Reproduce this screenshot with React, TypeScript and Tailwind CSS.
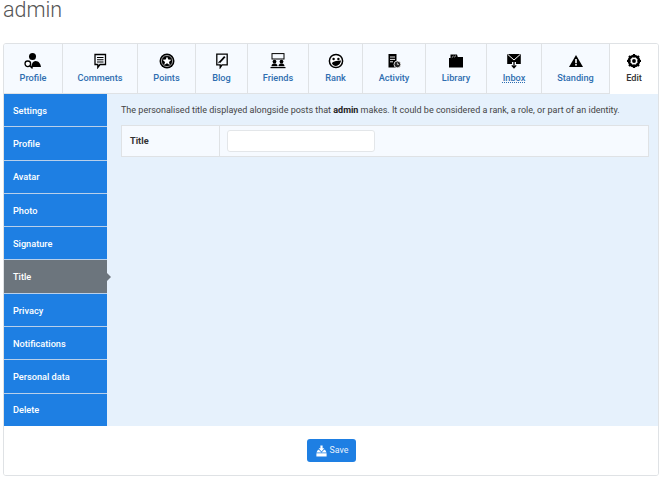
const font = { fontFamily: "Roboto, 'Open Sans', sans-serif" };

const ProfileIcon = () => (
  <svg width="18" height="16" viewBox="0 0 18 16" fill="#000">
    <circle cx="8.5" cy="3.5" r="3.5" />
    <path d="M7 14 C8 10 9 8 11.5 8 C15 8 16.5 11 17 14 Z" />
    <circle cx="3.8" cy="10.8" r="2.8" fill="#fff" stroke="#000" strokeWidth="1.3" />
    <path d="M5.8 12.8 L8.6 15.4" stroke="#000" strokeWidth="1.5" />
  </svg>
);

const CommentsIcon = () => (
  <svg width="16" height="16" viewBox="0 0 16 16" fill="none" stroke="#000">
    <path d="M3 1.5 H13.5 V11.5 H8 L5.8 14.5 V11.5 H3 Z" strokeWidth="1.3" />
    <path d="M5 4.5 H11.5 M5 6.7 H11.5 M5 9 H11.5" strokeWidth="1.1" />
  </svg>
);

const PointsIcon = () => (
  <svg width="16" height="16" viewBox="0 0 16 16">
    <circle cx="8" cy="8" r="7.5" fill="#000" />
    <circle cx="8" cy="8" r="5.6" fill="none" stroke="#fff" strokeWidth="0.6" />
    <path d="M8 3.6 L9.3 6.6 L12.4 6.8 L10 8.9 L10.8 12 L8 10.3 L5.2 12 L6 8.9 L3.6 6.8 L6.7 6.6 Z" fill="#fff" />
  </svg>
);

const BlogIcon = () => (
  <svg width="16" height="16" viewBox="0 0 16 16" fill="none" stroke="#000">
    <path d="M2.8 1.2 H13.2 V11.8 H8 L6.2 14.6 V11.8 H2.8 Z" strokeWidth="1.3" />
    <path d="M5.5 9.5 L10.8 3.6" strokeWidth="1.8" />
    <path d="M4.6 10.2 L5.4 8.4" strokeWidth="1" />
  </svg>
);

const FriendsIcon = () => (
  <svg width="18" height="16" viewBox="0 0 18 16" fill="#000">
    <rect x="3" y="0.6" width="12" height="5.4" fill="none" stroke="#000" strokeWidth="1" />
    <circle cx="5.5" cy="8.6" r="1.9" />
    <circle cx="12.5" cy="8.6" r="1.9" />
    <path d="M2.4 13.2 C2.8 11 4 10.6 5.5 10.6 C7 10.6 8.2 11 8.6 13.2 Z" />
    <path d="M9.4 13.2 C9.8 11 11 10.6 12.5 10.6 C14 10.6 15.2 11 15.6 13.2 Z" />
    <rect x="1.5" y="14" width="15" height="1.2" />
  </svg>
);

const RankIcon = () => (
  <svg width="16" height="16" viewBox="0 0 16 16">
    <circle cx="8" cy="8" r="6.6" fill="#fff" stroke="#000" strokeWidth="1.5" />
    <circle cx="5.6" cy="6" r="1.2" fill="#000" />
    <circle cx="10.4" cy="6" r="1.2" fill="#000" />
    <path d="M3.8 10 C6 8 9.5 8 13 7.6 C12.6 11 10 13 8 13 C6 13 4.6 12 3.8 10 Z" fill="#000" />
  </svg>
);

const ActivityIcon = () => (
  <svg width="16" height="16" viewBox="0 0 16 16">
    <path d="M2.5 1 H10.5 V14.5 H2.5 Z" fill="#000" />
    <path d="M4 4 H9 M4 6.4 H9 M4 8.8 H7" stroke="#fff" strokeWidth="0.9" />
    <circle cx="11.4" cy="11.4" r="3.4" fill="#222" stroke="#fff" strokeWidth="0.8" />
    <path d="M11.4 9.6 V11.4 H13" stroke="#fff" strokeWidth="0.7" fill="none" />
  </svg>
);

const LibraryIcon = () => (
  <svg width="16" height="16" viewBox="0 0 16 16">
    <path d="M1 5 H2.5 V1.5 H9 L9.8 4 H15 V14.5 H1 Z" fill="#000" />
    <path d="M3.8 4.6 L5.6 3 M6.2 4.2 L8 2.6" stroke="#fff" strokeWidth="0.7" />
  </svg>
);

const InboxIcon = () => (
  <svg width="16" height="16" viewBox="0 0 16 16">
    <path d="M1.2 1 H14.8 V11 H10 V9 H6 V11 H1.2 Z" fill="#000" />
    <path d="M1.5 1.2 L8 7 L14.5 1.2" fill="none" stroke="#fff" strokeWidth="1" />
    <path d="M8 8 V14.5 M5.8 12.4 L8 14.8 L10.2 12.4" fill="none" stroke="#000" strokeWidth="1.3" />
  </svg>
);

const StandingIcon = () => (
  <svg width="16" height="16" viewBox="0 0 16 16">
    <path d="M8 2 L15 14 H1 Z" fill="#000" />
    <rect x="7.2" y="6" width="1.6" height="4.2" fill="#fff" />
    <rect x="7.2" y="11" width="1.6" height="1.6" fill="#fff" />
  </svg>
);

const EditIcon = () => (
  <svg width="16" height="16" viewBox="0 0 16 16">
    <circle cx="8" cy="8" r="5" fill="none" stroke="#000" strokeWidth="2.6" />
    <path d="M8 1 V15 M1 8 H15 M3 3 L13 13 M13 3 L3 13" stroke="#000" strokeWidth="2.2" />
    <circle cx="8" cy="8" r="3.4" fill="#fff" />
    <circle cx="8" cy="8" r="1.9" fill="#000" />
  </svg>
);

const SaveIcon = () => (
  <svg width="11" height="12" viewBox="0 0 14 15" fill="#fff">
    <path d="M5.6 0.5 H8.4 V4 H10.6 L7 8 L3.4 4 H5.6 Z" />
    <path d="M2.5 6 H3.6 L7 9.4 L10.4 6 H11.5 L13.5 9.5 H0.5 Z" />
    <path d="M0.5 10.4 H13.5 V14.5 H0.5 Z" />
  </svg>
);

const tabs = [
  { label: "Profile", width: "w-[59px]", icon: <ProfileIcon /> },
  { label: "Comments", width: "w-[75px]", icon: <CommentsIcon /> },
  { label: "Points", width: "w-[58px]", icon: <PointsIcon /> },
  { label: "Blog", width: "w-[52px]", icon: <BlogIcon /> },
  { label: "Friends", width: "w-[61px]", icon: <FriendsIcon /> },
  { label: "Rank", width: "w-[54px]", icon: <RankIcon /> },
  { label: "Activity", width: "w-[63px]", icon: <ActivityIcon /> },
  { label: "Library", width: "w-[61px]", icon: <LibraryIcon /> },
  { label: "Inbox", width: "w-[55px]", icon: <InboxIcon />, dotted: true },
  { label: "Standing", width: "w-[68px]", icon: <StandingIcon /> },
];

const sideItems = [
  "Settings",
  "Profile",
  "Avatar",
  "Photo",
  "Signature",
  "Title",
  "Privacy",
  "Notifications",
  "Personal data",
  "Delete",
];

const App = () => {
  return (
    <div className="h-[480px] w-[661px] overflow-hidden bg-white" style={font}>
      <h1 className="h-[43px] pl-[3px] text-[21.5px] leading-[19px] font-light text-[#555]">
        admin
      </h1>
      <div className="ml-[3px] w-[656px] h-[433px] rounded-[3px] border border-[#dfe2e5] flex flex-col overflow-hidden">
        <div className="flex h-[50px] shrink-0">
          {tabs.map((tab) => (
            <div
              key={tab.label}
              className={`${tab.width} flex flex-col items-center pt-[9px] bg-[#f6faff] border-r border-b border-[#dfe2e5]`}
            >
              <div className="h-[16px]">{tab.icon}</div>
              <span
                className={`mt-[2px] text-[9.2px] leading-[14px] font-medium text-[#2f6eb0] ${
                  tab.dotted ? "underline decoration-dotted" : ""
                }`}
              >
                {tab.label}
              </span>
            </div>
          ))}
          <div className="flex-1 flex flex-col items-center pt-[9px] bg-white">
            <div className="h-[16px]">
              <EditIcon />
            </div>
            <span className="mt-[2px] text-[9.2px] leading-[14px] font-medium text-[#333]">
              Edit
            </span>
          </div>
        </div>
        <div className="flex h-[332px] shrink-0">
          <div className="w-[103px] shrink-0 flex flex-col">
            {sideItems.map((item) => (
              <div
                key={item}
                className={`relative flex-1 flex items-center pl-[9px] pt-[1px] border-b border-[#b9d0ea] last:border-b-0 text-[9.2px] font-medium text-white ${
                  item === "Title" ? "bg-[#6c757d]" : "bg-[#1e7fe3]"
                }`}
              >
                {item}
                {item === "Title" && (
                  <span className="absolute left-full top-[13px] border-y-[4px] border-l-[4px] border-y-transparent border-l-[#6c757d]" />
                )}
              </div>
            ))}
          </div>
          <div className="flex-1 bg-[#e6f1fc] px-[14px] pt-[9px]">
            <p className="text-[9px] leading-[14px] text-[#444] whitespace-nowrap">
              The personalised title displayed alongside posts that <b className="text-[#222]">admin</b> makes. It could be considered a rank, a role, or part of an identity.
            </p>
            <div className="mt-[8px] h-[32px] w-[528px] flex bg-[#f6faff] border border-[#dfe2e5]">
              <div className="w-[98px] flex items-center pl-[8px] border-r border-[#dfe2e5] text-[9.2px] font-bold text-[#333]">
                Title
              </div>
              <div className="flex items-center pl-[7px]">
                <div className="w-[148px] h-[22px] rounded-[3px] bg-white border border-[#e3e6e9]" />
              </div>
            </div>
          </div>
        </div>
        <div className="flex-1 flex items-center justify-center bg-white">
          <div className="flex items-center gap-[3px] w-[49px] h-[23px] pl-[9px] rounded-[3px] bg-[#1e7fe3] text-[8.8px] text-[#e6f1fc]">
            <SaveIcon />
            Save
          </div>
        </div>
      </div>
    </div>
  );
};

export default App;
